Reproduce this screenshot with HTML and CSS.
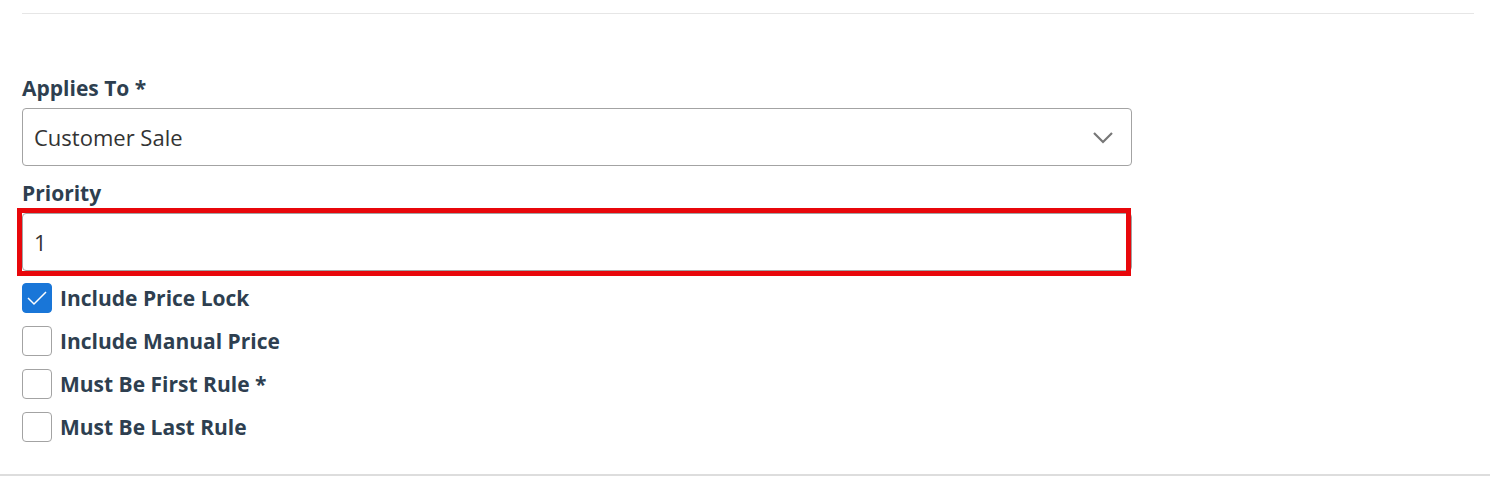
FILE: index.html
```html
<!DOCTYPE html>
<html>
<head>
    <title>Pricing Rule</title>
    <link rel="stylesheet" href="styles.css">
</head>
<body>

<div class="panel">
    <hr class="top-rule">

    <form class="rule-form">
        <div class="field">
            <label for="applies">Applies To *</label>
            <div class="select-wrap">
                <select id="applies" name="applies">
                    <option selected>Customer Sale</option>
                    <option>Vendor Purchase</option>
                </select>
                <svg class="chevron" width="22" height="14" viewBox="0 0 22 14">
                    <path d="M2 2 L11 11 L20 2" fill="none" stroke="#777" stroke-width="2.2"/>
                </svg>
            </div>
        </div>

        <div class="field">
            <label for="priority">Priority</label>
            <div class="input-wrap">
                <input type="text" id="priority" name="priority" value="1">
                <div class="highlight"></div>
            </div>
        </div>

        <div class="checks">
            <label class="check">
                <span class="box checked">
                    <svg width="22" height="18" viewBox="0 0 22 18"><path d="M2 9 L8 15 L20 3" fill="none" stroke="#fff" stroke-width="1.5"/></svg>
                </span>
                Include Price Lock
            </label>
            <label class="check"><span class="box"></span>Include Manual Price</label>
            <label class="check"><span class="box"></span>Must Be First Rule *</label>
            <label class="check"><span class="box"></span>Must Be Last Rule</label>
        </div>
    </form>
</div>
<div class="bottom-rule"></div>

</body>
</html>
```

FILE: styles.css
```css
body {
    font-family: "Open Sans", "Noto Sans", sans-serif;
    background-color: #fff;
    color: #333;
    margin: 0;
    padding: 0;
}
.panel {
    padding: 13px 16px 0 22px;
}
.top-rule {
    border: none;
    border-top: 1px solid #e6e6e6;
    margin: 0;
}
.rule-form {
    width: 1110px;
    padding-top: 60px;
}
.field label {
    display: block;
    font-size: 21px;
    font-weight: bold;
    color: #2e3f50;
    line-height: 28px;
    margin-bottom: 6px;
}
.field + .field label {
    margin-top: 13px;
}
.select-wrap, .input-wrap {
    position: relative;
}
select, input[type="text"] {
    display: block;
    width: 100%;
    height: 58px;
    box-sizing: border-box;
    padding: 0 11px;
    font-family: inherit;
    font-size: 22px;
    color: #333;
    background: #fff;
    border: 1px solid #a3a3a3;
    border-radius: 4px;
    appearance: none;
    -webkit-appearance: none;
    outline: none;
}
.chevron {
    position: absolute;
    right: 18px;
    top: 23px;
    pointer-events: none;
}
.highlight {
    position: absolute;
    left: -5px;
    top: -5px;
    width: 1114px;
    height: 68px;
    box-sizing: border-box;
    border: 5px solid #e8070b;
    pointer-events: none;
}
.checks {
    display: flex;
    flex-direction: column;
    gap: 13px;
    margin-top: 12px;
}
.check {
    display: flex;
    align-items: center;
    gap: 8px;
    font-size: 21px;
    font-weight: bold;
    color: #2e3f50;
    height: 30px;
}
.box {
    width: 30px;
    height: 30px;
    box-sizing: border-box;
    border: 1px solid #a3a3a3;
    border-radius: 4px;
    display: flex;
    align-items: center;
    justify-content: center;
}
.box.checked {
    background: #1976d8;
    border-color: #1976d8;
}
.bottom-rule {
    margin-top: 32px;
    border-top: 2px solid #dddddd;
}
```
